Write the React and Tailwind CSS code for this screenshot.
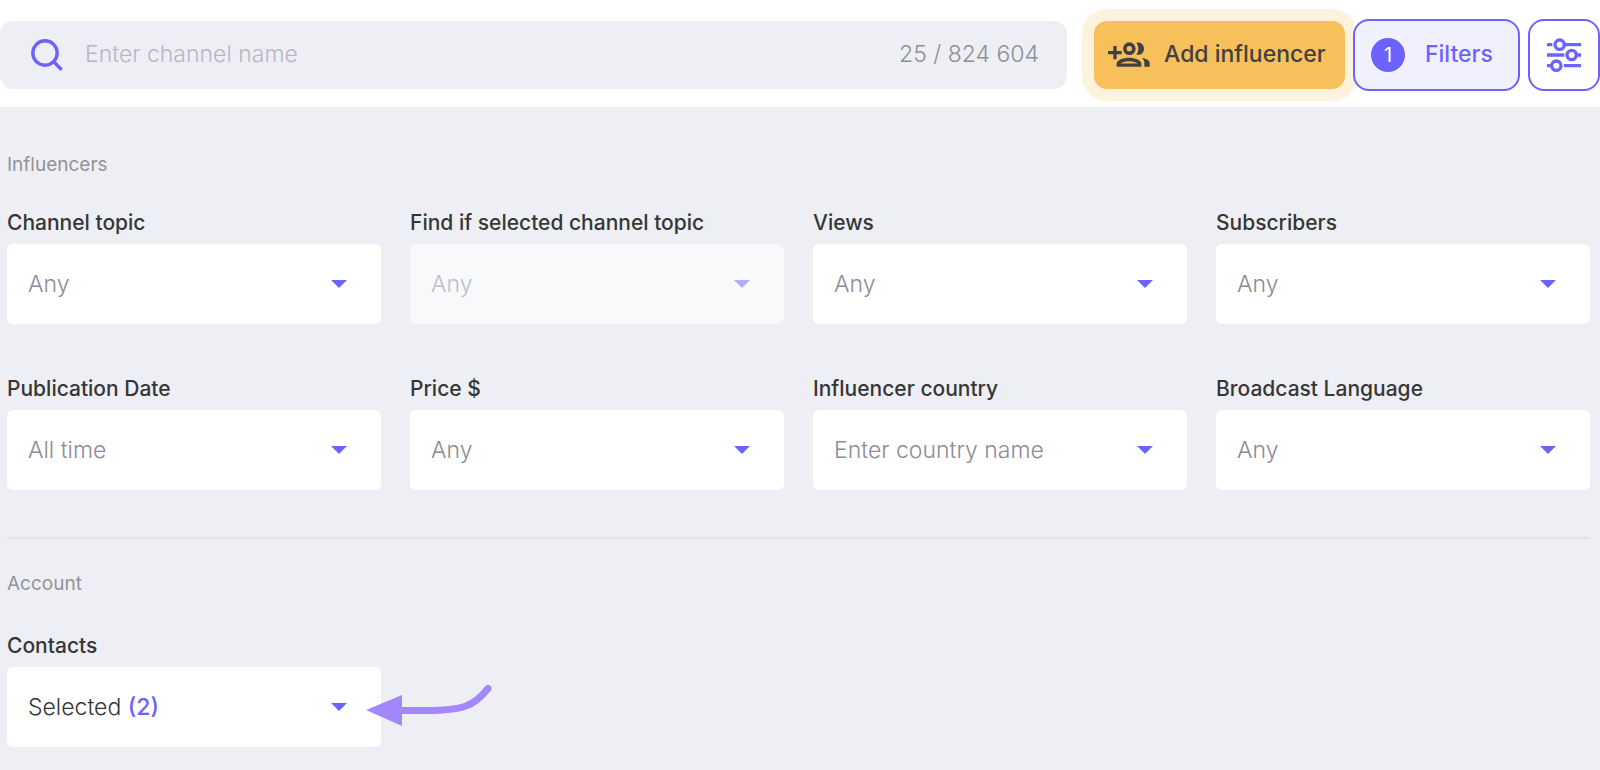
const influencerFilters = [
  { id: 'topic', label: 'Channel topic', value: 'Any' },
  { id: 'subtopic', label: 'Find if selected channel topic', value: 'Any', disabled: true },
  { id: 'views', label: 'Views', value: 'Any' },
  { id: 'subscribers', label: 'Subscribers', value: 'Any' },
  { id: 'date', label: 'Publication Date', value: 'All time' },
  { id: 'price', label: 'Price $', value: 'Any' },
  { id: 'country', label: 'Influencer country', placeholder: 'Enter country name' },
  { id: 'language', label: 'Broadcast Language', value: 'Any' },
]

function SearchIcon() {
  return (
    <svg className="h-8 w-8 shrink-0" viewBox="0 0 32 32" fill="none" stroke="#6c63ff" strokeWidth="3.4" strokeLinecap="round" aria-hidden="true">
      <circle cx="14" cy="14" r="12.2" />
      <path d="M22.8 22.8l6.8 7" />
    </svg>
  )
}

function AddGroupIcon() {
  return (
    <svg className="h-[25px] w-[42px] shrink-0" viewBox="0 0 126 75" fill="#414143" aria-hidden="true">
      <path d="M16 12h10v15h15v10H26v15H16V37H0V27h16z" />
      <circle cx="64" cy="20" r="13.5" fill="none" stroke="#414143" strokeWidth="11" />
      <path d="M85 2c13-3 23 6 23 18s-10 21-23 18c8-11 8-25 0-36z" />
      <path
        fillRule="evenodd"
        d="M26 74V64c0-10 20-17 37-17s37 7 37 17v10zM37 64.500h52c-4-4-15-7-26-7s-22 3-26 7z"
      />
      <path d="M102 48c13 2 23 8 23 15v11h-16V63c0-6-2-10-7-15z" />
    </svg>
  )
}

function SlidersIcon() {
  return (
    <svg className="h-9 w-9" viewBox="0 0 108 108" fill="none" stroke="#6c63ff" strokeWidth="10" aria-hidden="true">
      <path d="M3 23h16M55 23h50M3 54h52M91 54h14M3 86h12M54 86h51" />
      <circle cx="41" cy="23" r="14" />
      <circle cx="77" cy="54" r="14" />
      <circle cx="31" cy="86" r="14" />
    </svg>
  )
}

function Caret({ disabled }) {
  return (
    <svg
      className={`pointer-events-none absolute right-[34px] top-1/2 h-2 w-4 -translate-y-1/2 ${disabled ? 'text-[#b3abfa]' : 'text-[#6c63ff]'}`}
      viewBox="0 0 16 8"
      fill="currentColor"
      aria-hidden="true"
    >
      <path d="M0 0h16L8 8z" />
    </svg>
  )
}

function FilterField({ filter }) {
  const { id, label, value, placeholder, disabled } = filter
  const box = 'block h-20 w-full appearance-none rounded-md pl-[21px] pr-14 text-[23px] font-light opacity-100 outline-none'
  return (
    <div>
      <label htmlFor={id} className="block pb-[7px] text-[21px] leading-7 font-medium text-[#363636]">{label}</label>
      <div className="relative">
        {placeholder ? (
          <input id={id} type="text" placeholder={placeholder} className={`${box} bg-white placeholder:text-[#8d8b96]`} />
        ) : (
          <select
            id={id}
            disabled={disabled}
            className={`${box} ${disabled ? 'bg-[#f8f9fb] text-[#c0bdcc]' : 'bg-white text-[#8d8b96]'}`}
          >
            <option>{value}</option>
          </select>
        )}
        <Caret disabled={disabled} />
      </div>
    </div>
  )
}

function CurvedArrow() {
  return (
    <svg className="pointer-events-none absolute left-[359px] top-4 h-[46px] w-[128px]" viewBox="0 0 128 46" aria-hidden="true">
      <path d="M34 27.500h26c36 0 48-4 62-22" fill="none" stroke="#a388fd" strokeWidth="7" />
      <circle cx="122" cy="5.500" r="3.500" fill="#a388fd" />
      <path d="M0 27L36 12v31z" fill="#a388fd" />
    </svg>
  )
}

export default function App() {
  return (
    <div className="min-h-screen bg-[#eeeff5] font-['Inter','Liberation_Sans',sans-serif]">
      <header className="flex h-[107px] items-center bg-white pt-[2px]">
        <div className="mr-[27px] flex h-[68px] min-w-0 flex-1 items-center rounded-[13px] bg-[#eeeff5] pr-7 pl-[31px]">
          <SearchIcon />
          <input
            type="search"
            aria-label="Channel name"
            placeholder="Enter channel name"
            className="ml-[22px] min-w-0 flex-1 bg-transparent text-[23px] font-light outline-none placeholder:text-[#b9b7c3]"
          />
          <span className="text-[23px] font-light whitespace-nowrap text-[#8f8f96]">25 / 824 604</span>
        </div>
        <div className="flex items-center gap-2">
          <button className="flex h-[68px] w-[251px] items-center gap-[14px] rounded-[13px] bg-[#f7c05b] pl-[14px] text-[23px] font-medium whitespace-nowrap text-[#414143] ring-12 ring-[#fdf3dc]">
            <AddGroupIcon />
            Add influencer
          </button>
          <button className="relative flex h-[72px] w-[167px] items-center gap-5 rounded-2xl border-2 border-[#6c63ff] bg-[#f1f0ff] pl-4 text-[23px] font-medium text-[#6c63ff]">
            <span className="flex h-[34px] w-[34px] items-center justify-center rounded-full bg-[#6c63ff] text-xl font-normal text-white">1</span>
            Filters
          </button>
          <button aria-label="Settings" className="flex h-[72px] w-[72px] items-center justify-center rounded-2xl border-2 border-[#6c63ff] bg-white">
            <SlidersIcon />
          </button>
        </div>
      </header>

      <main className="pt-[44px] pr-[10px] pl-[7px]">
        <section>
          <h2 className="text-[19px] leading-7 text-[#939398]">Influencers</h2>
          <div className="grid grid-cols-4 gap-x-[29px] gap-y-[51px] pt-[30px]">
            {influencerFilters.map(f => <FilterField key={f.id} filter={f} />)}
          </div>
        </section>

        <hr className="mt-[47px] border-t-2 border-[#e2e2e8]" />

        <section className="pt-[31px]">
          <h2 className="text-[19px] leading-7 text-[#939398]">Account</h2>
          <div className="grid grid-cols-4 gap-x-[29px] pt-[34px]">
            <div>
              <label htmlFor="contacts" className="block pb-[7px] text-[21px] leading-7 font-medium text-[#363636]">Contacts</label>
              <div className="relative">
                <button
                  id="contacts"
                  aria-haspopup="listbox"
                  className="block h-20 w-full rounded-md bg-white pr-14 pl-[21px] text-left text-[23px] font-light text-[#363636]"
                >
                  Selected <span className="font-medium text-[#6c63ff]">(2)</span>
                </button>
                <Caret />
                <CurvedArrow />
              </div>
            </div>
          </div>
        </section>
      </main>
    </div>
  )
}
